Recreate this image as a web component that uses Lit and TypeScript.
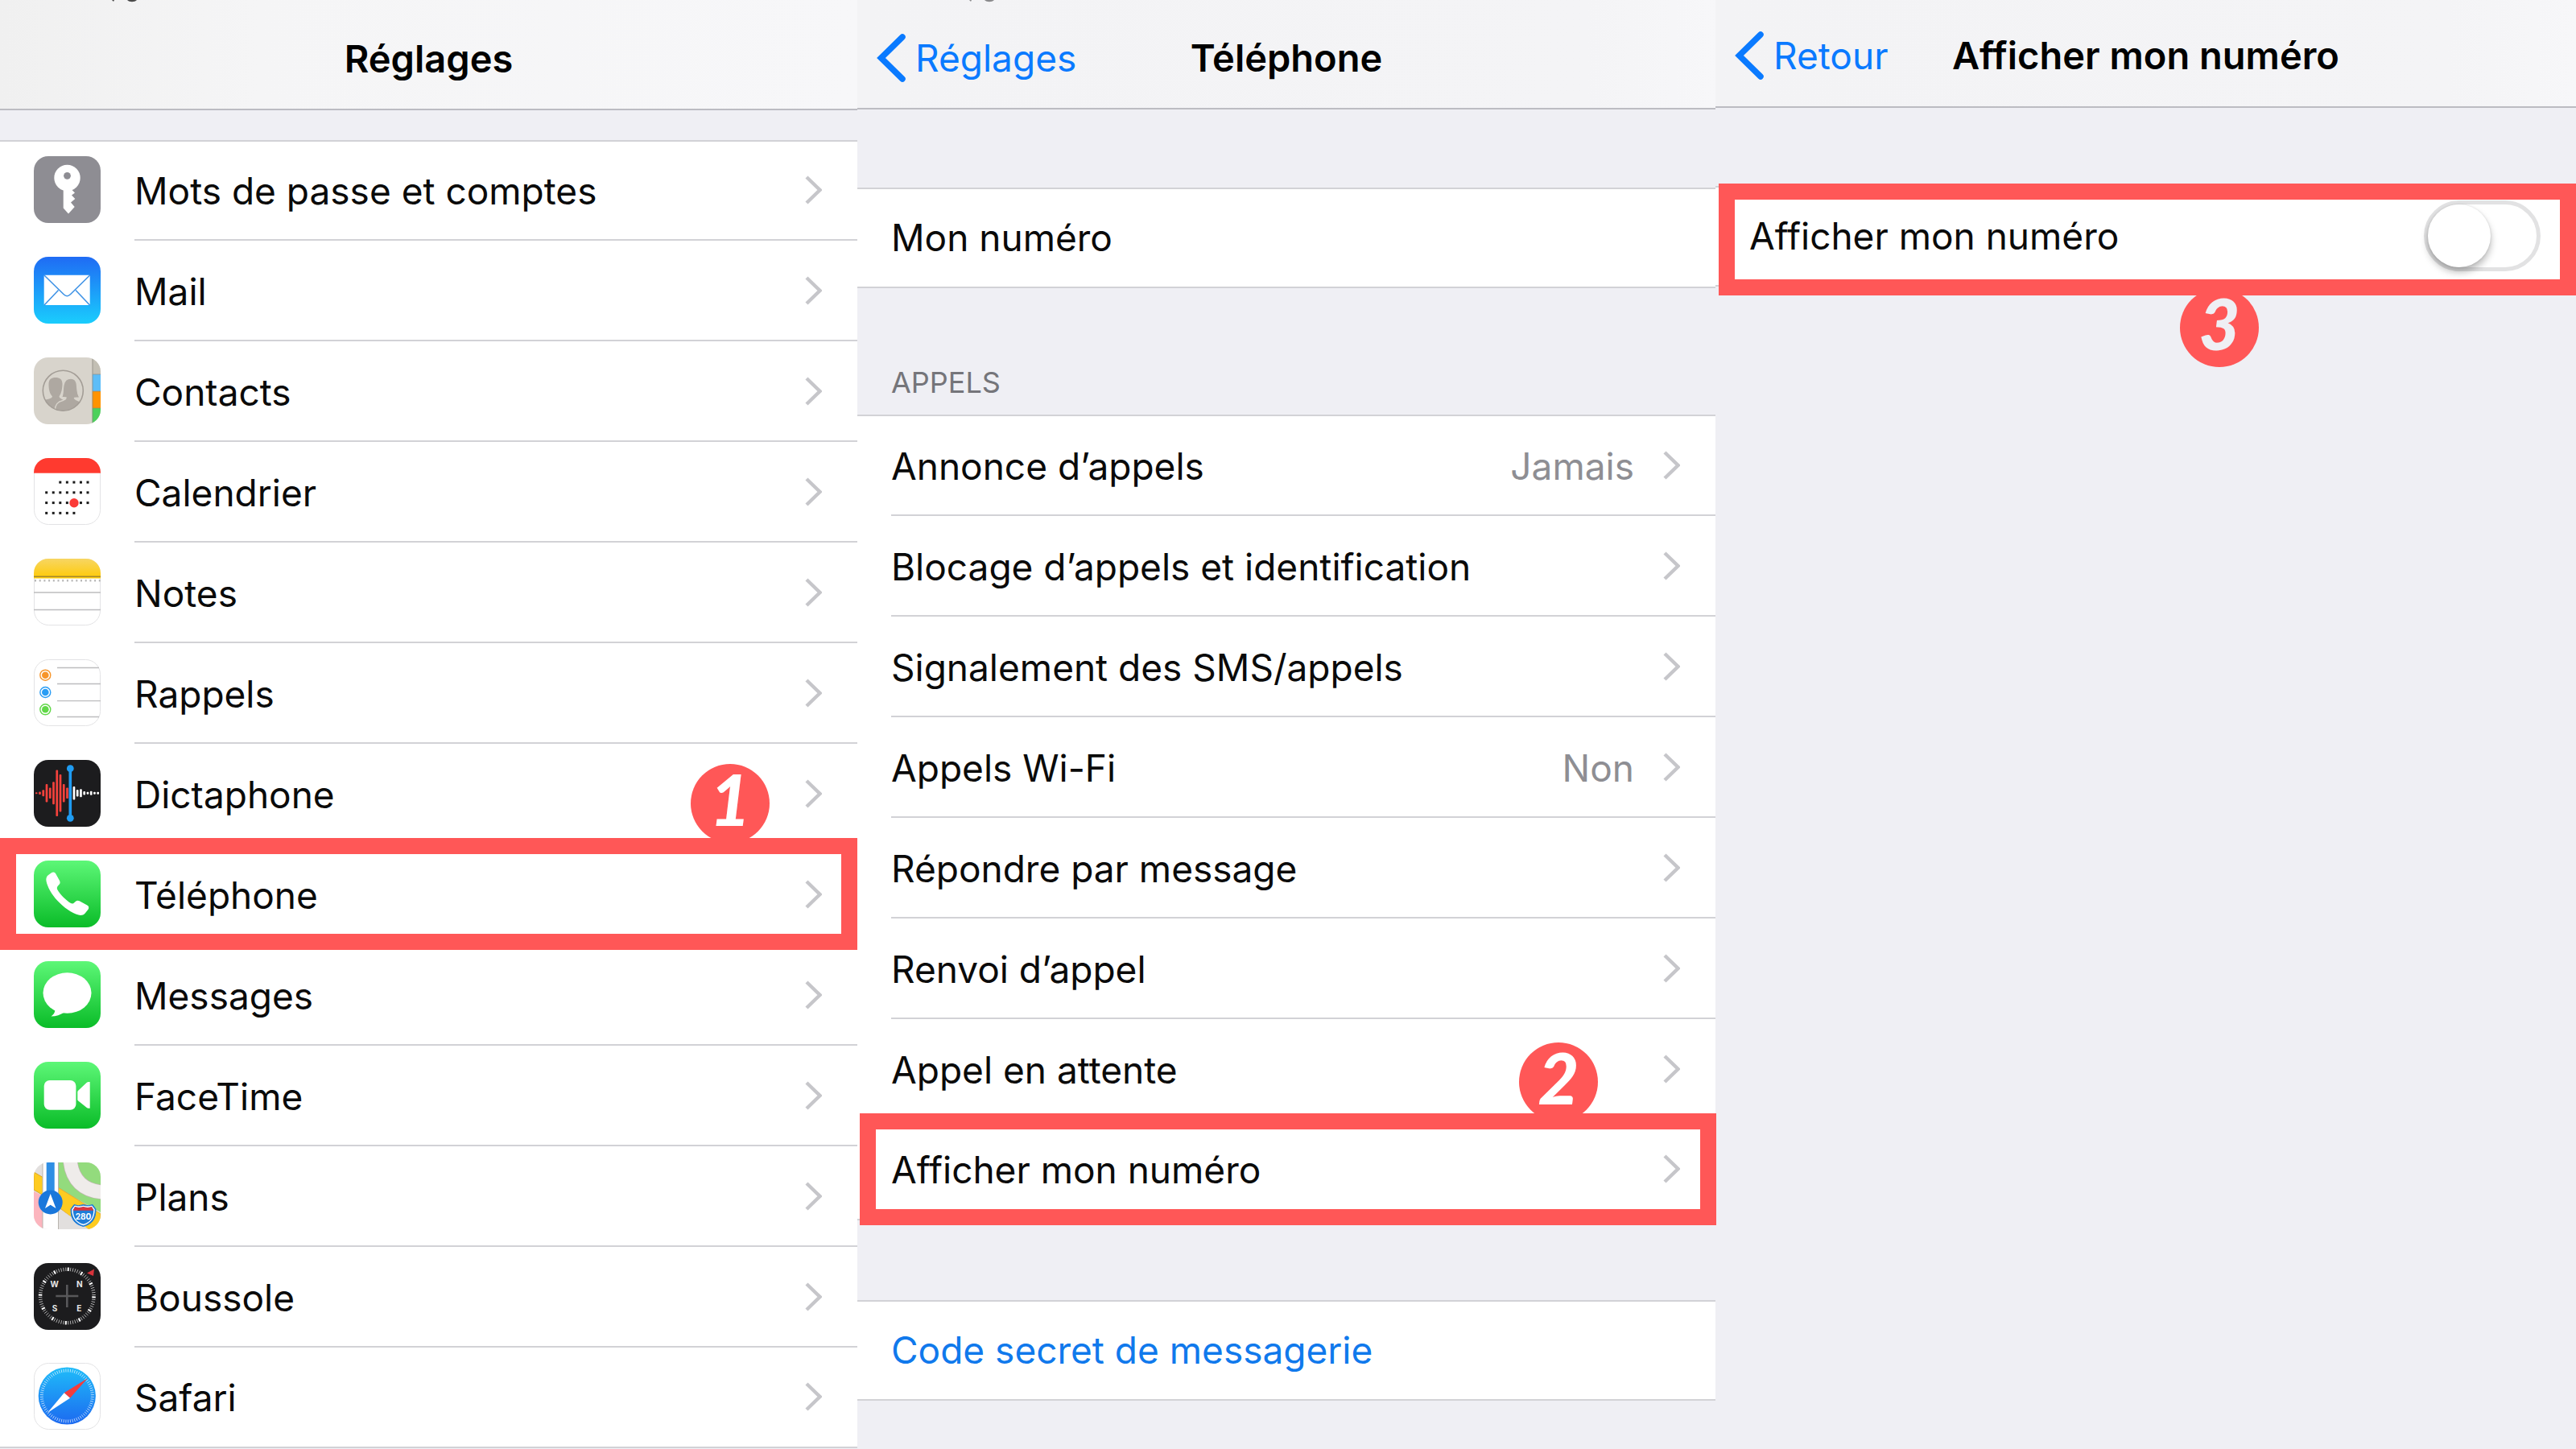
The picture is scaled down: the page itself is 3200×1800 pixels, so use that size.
import { LitElement, html, svg, css, nothing, TemplateResult } from "lit";
import { customElement, property, state } from "lit/decorators.js";

type Art = TemplateResult;

interface Item {
  label: string;
  icon?: string;
  value?: string;
  step?: number;
}

const phones: Item[] = [
  { label: "Mots de passe et comptes", icon: "key" },
  { label: "Mail", icon: "mail" },
  { label: "Contacts", icon: "contacts" },
  { label: "Calendrier", icon: "calendar" },
  { label: "Notes", icon: "notes" },
  { label: "Rappels", icon: "reminders" },
  { label: "Dictaphone", icon: "voice" },
  { label: "Téléphone", icon: "phone", step: 1 },
  { label: "Messages", icon: "messages" },
  { label: "FaceTime", icon: "facetime" },
  { label: "Plans", icon: "maps" },
  { label: "Boussole", icon: "compass" },
  { label: "Safari", icon: "safari" },
];

const calls: Item[] = [
  { label: "Annonce d’appels", value: "Jamais" },
  { label: "Blocage d’appels et identification" },
  { label: "Signalement des SMS/appels" },
  { label: "Appels Wi-Fi", value: "Non" },
  { label: "Répondre par message" },
  { label: "Renvoi d’appel" },
  { label: "Appel en attente" },
  { label: "Afficher mon numéro", step: 2 },
];

const gradient = (id: string, from: string, to: string): Art => svg`
  <linearGradient id=${id} x1="0" y1="0" x2="0" y2="1">
    <stop offset="0" stop-color=${from} /><stop offset="1" stop-color=${to} />
  </linearGradient>`;

const tile = (fill: string): Art => svg`<rect width="83" height="83" rx="18" fill=${fill} />`;
const outline = svg`<rect x="0.5" y="0.5" width="82" height="82" rx="18" fill="none" stroke="#e3e3e5" />`;

const calendarRows: number[][] = [
  [2, 3, 4, 5, 6],
  [0, 1, 2, 3, 4, 5, 6],
  [0, 1, 2, 3, 4, 5, 6],
  [0, 1, 2, 3, 4],
];

const redBars = [1, 1.7, 4, 11.3, 6.7, 14, 28.7, 23.3, 11.3, 6.7];
const whiteBars = [8.3, 4.3, 5, 2.3, 1.5, 2.5, 1.5, 1.5];

const ticks = (count: number, inner: number, outer: number, bold: number): Art[] =>
  Array.from({ length: count }, (_, i) => {
    const a = ((i + 0.5) * 2 * Math.PI) / count;
    const strong = bold > 0 && i % bold === 0;
    return svg`<line
      x1=${41.3 + inner * Math.sin(a)} y1=${41 - inner * Math.cos(a)}
      x2=${41.3 + outer * Math.sin(a)} y2=${41 - outer * Math.cos(a)}
      stroke="#fff" stroke-width=${strong ? 2 : 1} stroke-opacity=${strong ? 1 : 0.65} />`;
  });

const icons: Record<string, () => Art> = {
  key: () => svg`
    ${tile("#8e8d93")}
    <path fill="#fff" d="M36.7 39V64.5L43 71.5L50.7 63L46 57.5L51.3 53L47 48.5L51 45.5L46.5 41V39Z" />
    <circle cx="41.5" cy="27" r="16.2" fill="#fff" />
    <circle cx="41.5" cy="24.3" r="4.4" fill="#8e8d93" />`,
  mail: () => svg`
    <defs>${gradient("g-mail", "#1f6bf4", "#1acdfd")}</defs>
    ${tile("url(#g-mail)")}
    <rect x="12.7" y="22.7" width="57" height="37.3" rx="1" fill="#fff" />
    <g fill="none" stroke="#3f93e6" stroke-width="1.6">
      <path d="M13 23L37 46.5Q41.3 51 45.6 46.5L69.5 23" />
      <path d="M13 60L30.5 41.5M69.5 60L52 41.5" />
    </g>`,
  contacts: () => svg`
    <defs><clipPath id="c-con"><rect width="83" height="83" rx="18" /></clipPath>
      <clipPath id="c-ring"><circle cx="36.3" cy="41.3" r="25" /></clipPath></defs>
    <g clip-path="url(#c-con)">
      <rect width="83" height="83" fill="#d8d4cc" />
      <rect x="72.7" width="11" height="21" fill="#c3bfb4" />
      <rect x="72.7" y="21" width="11" height="21" fill="#5dbdf8" />
      <rect x="72.7" y="42" width="11" height="21" fill="#ff9300" />
      <rect x="72.7" y="63" width="11" height="20" fill="#4bd15b" />
      <path d="M73 0V83M73 21H83M73 42H83M73 63H83" stroke="#8b877f" stroke-width="1.2" stroke-opacity="0.6" />
    </g>
    <g clip-path="url(#c-ring)" fill="#aea8a1">
      <path d="M11 56C12 51 22 53 23 48.500C19 44 18.500 38 18.500 33C18.500 27 22 25 27 25C32 25 35.500 27 35.500 33C35.500 38 34.500 44 31.500 48.500C32 52 38 52 38 55V68H11Z" />
      <path stroke="#d8d4cc" stroke-width="1.4" d="M26 68C26 58 30 55 36 53.500C39 52.500 40 51.500 40 50C38 49.500 36 50 34.500 49.500C37 45 35.500 40 37 34C38 29 41 26 46 26C51 26 53 29 53.500 34C54 41 54 46 57 49.500C55.500 50.500 52 50 50.500 50.500C50.500 52 54 53 58 55V68Z" />
    </g>
    <circle cx="36.3" cy="41.3" r="25" fill="none" stroke="#a39d96" stroke-width="1.6" />`,
  calendar: () => svg`
    <defs><clipPath id="c-cal"><rect width="83" height="83" rx="18" /></clipPath></defs>
    ${tile("#fff")}${outline}
    <rect width="83" height="18.7" fill="#ff3a2f" clip-path="url(#c-cal)" />
    ${calendarRows.map((cols, r) =>
      cols.map((c) => svg`<rect x=${14.2 + c * 8.55} y=${28.6 + r * 12.75} width="3" height="3" fill="#1a1a1a" />`)
    )}
    <circle cx="50" cy="55.700" r="5.700" fill="#fb3b38" />`,
  notes: () => svg`
    <defs><clipPath id="c-not"><rect width="83" height="83" rx="18" /></clipPath>
      ${gradient("g-not", "#f7d663", "#ffca05")}</defs>
    ${tile("#fff")}${outline}
    <g clip-path="url(#c-not)">
      <rect width="83" height="24.500" fill="url(#g-not)" />
      <path d="M0 22.300H83" stroke="#a58a2c" stroke-width="1.600" />
      <path d="M1 27.300H83" stroke="#b9b9b9" stroke-width="2.400" stroke-dasharray="2 3.700" />
      <path d="M0 42H83M0 63.500H83" stroke="#bdbdbf" stroke-width="1.300" />
    </g>`,
  reminders: () => svg`
    ${tile("#fff")}${outline}
    <path d="M29 10.500H81M29 30.500H83M29 51.700H83M29 71.500H81" stroke="#bdbdbf" stroke-width="1.300" />
    ${[["#f7952a", 19.7], ["#2a9df4", 41], ["#61d848", 62.3]].map(
      ([c, y]) => svg`<circle cx="14.300" cy=${y} r="6.500" fill="#fff" stroke=${c} stroke-width="1.400" />
        <circle cx="14.300" cy=${y} r="4.300" fill=${c} />`
    )}`,
  voice: () => svg`
    ${tile("#1c1c1e")}
    ${redBars.map((h, i) => svg`<rect x=${1.9 + i * 4.25} y=${41.3 - h} width="2.700" height=${2 * h} rx="1" fill="#f5423c" />`)}
    ${whiteBars.map((h, i) => svg`<rect x=${48.6 + i * 4.25} y=${41.3 - h} width="2.700" height=${2 * h} rx="1" fill="#fff" />`)}
    <path d="M45.300 10.700V72.300" stroke="#1f9cf2" stroke-width="3.600" />
    <circle cx="45.300" cy="10.700" r="4.400" fill="#1f9cf2" /><circle cx="45.300" cy="72.300" r="4.400" fill="#1f9cf2" />`,
  phone: () => svg`
    <defs>${gradient("g-pho", "#5df777", "#0abc28")}</defs>
    ${tile("url(#g-pho)")}
    <path fill="#fff" d="M21.500 15.500C23.500 14 26 14.300 27.300 16.500L32 25C33 27 32.800 28.300 31.500 29.700L29.700 31.800C28.500 33.300 28.600 35 29.500 36.500C33 42.500 39.500 49 46 53C47.500 53.800 49 53.700 50.300 52.300L52 50.800C53.500 49.500 55 49.500 56.700 50.300L66.300 55.500C68.500 56.700 68.800 58.800 67.500 60.700L63.500 65.700C61.500 68 58.500 68.300 55.500 67.600C47 65.300 37.500 58.500 29.500 50C22 42 17 33 15.500 25.500C15 22.500 15.500 20 18 18Z" />`,
  messages: () => svg`
    <defs>${gradient("g-mes", "#5df777", "#0abc28")}</defs>
    ${tile("url(#g-mes)")}
    <ellipse cx="41.500" cy="39.500" rx="30" ry="25.300" fill="#fff" />
    <path fill="#fff" d="M26 59C27 63 25 66 21.500 68.500C28 68.500 33 66.500 38 63.500Z" />`,
  facetime: () => svg`
    <defs>${gradient("g-fac", "#5df777", "#0abc28")}</defs>
    ${tile("url(#g-fac)")}
    <rect x="12.700" y="23" width="39.700" height="36.700" rx="7" fill="#fff" />
    <path fill="#fff" d="M54.300 38C54.300 37 54.500 36.500 55.200 35.800L65.500 26Q66.700 25 68 25H69.700V57.700H68Q66.700 57.700 65.500 56.700L55.200 48.500C54.500 48 54.300 47.500 54.300 46.500Z" />`,
  maps: () => svg`
    <defs><clipPath id="c-map"><rect width="83" height="83" rx="18" /></clipPath></defs>
    <g clip-path="url(#c-map)">
      <rect width="83" height="83" fill="#e2dfde" />
      <path d="M30 0H83V62L30 32Z" fill="#93db7d" />
      <path d="M0 12L12 19V41L0 34Z" fill="#fecb20" stroke="#d9a52a" />
      <path d="M0 36L12 42V83H0Z" fill="#fcb5be" />
      <path d="M30 31L83 64V83H66L30 55Z" fill="#fecb20" stroke="#e0a93a" />
      <path d="M30 56L69 83.500H30Z" fill="#e2dfde" />
      <path d="M45 -4C47 22 62 36 87 37" fill="none" stroke="#bdb7ae" stroke-width="18.500" />
      <path d="M45 -4C47 22 62 36 87 37" fill="none" stroke="#efecea" stroke-width="17" />
      <rect x="11" width="19.500" height="83" fill="#fff" />
      <path d="M11 0V83M30.500 0V83" stroke="#b9b4ae" stroke-width="1" />
      <rect x="15.700" width="10" height="42" fill="#2f8ee4" />
      <circle cx="20.700" cy="49.500" r="15" fill="#1977db" />
      <path d="M20.700 39L27.500 57L20.700 52.800L14 57Z" fill="#fff" />
      <path d="M50 52.500Q55 55 61.500 52.500Q68 55 73 52.500L77 58C77 70 73 76.500 61.500 79.500C50 76.500 46 70 46 58Z" fill="#1e7cd8" stroke="#1e7cd8" />
      <path d="M51 54.500Q56 56 61.500 54.500Q67 56 72 54.500L75 58.500C75 69 71 74.500 61.500 77.500C52 74.500 48 69 48 58.500Z" fill="#1e7cd8" stroke="#fff" stroke-width="1.500" />
      <path d="M51 55Q56 56.800 61.500 55Q67 56.800 72 55L74.300 59.800H48.700Z" fill="#d9343f" />
      <text x="61.500" y="70.500" text-anchor="middle" font-size="10" font-weight="700" fill="#fff">280</text>
    </g>`,
  compass: () => svg`
    ${tile("#1c1c1e")}
    ${ticks(72, 31, 35.5, 6)}
    <path d="M41.300 27V55M27.300 41H55.300" stroke="#58585a" stroke-width="2.600" />
    <path d="M66 12.500L75 7.500L74 16Z" fill="#d8333b" />
    <g font-size="10" font-weight="700" fill="#e6e6e6" text-anchor="middle">
      <text x="25.700" y="30">W</text><text x="56.700" y="30">N</text>
      <text x="26" y="60">S</text><text x="56.300" y="60">E</text>
    </g>`,
  safari: () => svg`
    <defs>${gradient("g-saf", "#1fbcf9", "#1c69f0")}</defs>
    ${tile("#fff")}${outline}
    <circle cx="41.300" cy="41" r="35.600" fill="url(#g-saf)" />
    ${ticks(72, 29.5, 33.5, 0)}
    <path d="M66.700 19.300L45 43.700L37.700 37.300Z" fill="#f33c3c" />
    <path d="M17 62L37.700 37.300L45 43.700Z" fill="#fff" />`,
};

@customElement("settings-icon")
class SettingsIcon extends LitElement {
  @property() name = "";

  static styles = css`
    :host { display: block; flex: none; width: 83px; height: 83px; }
    .art { display: block; width: 100%; height: 100%; font-family: Inter, "Liberation Sans", sans-serif; }
  `;

  render() {
    return html`<svg class="art" viewBox="0 0 83 83" aria-hidden="true">${icons[this.name]?.()}</svg>`;
  }
}

@customElement("app-root")
class AppRoot extends LitElement {
  @state() private shown = false;

  static styles = css`
    :host {
      display: block;
      min-height: 100vh;
      background: #efeff4;
      color: #0a0a0a;
      font: 400 46px/56px Inter, "Liberation Sans", sans-serif;
      overflow-x: hidden;
    }
    * { box-sizing: border-box; }
    a { color: inherit; text-decoration: none; }
    ul { list-style: none; margin: 0; padding: 0; }
    .screens {
      display: grid;
      grid-template-columns: 1065fr 1066fr 1069fr;
      min-height: 100vh;
    }
    .screen { min-width: 0; }

    .bar {
      position: relative;
      display: grid;
      grid-template-columns: 1fr auto 1fr;
      align-items: end;
      height: 137px;
      padding: 0 24px 34px;
      border-bottom: 2px solid #bcbcc2;
      background: linear-gradient(90deg, #f3f3f5, #f4f4f6 85%, #f7f7f9);
    }
    .bar.root { background: linear-gradient(90deg, #f0f0f0, #f5f5f6 30%, #f7f7f9); }
    .bar.second { height: 136px; }
    .bar.third { height: 134px; padding-bottom: 35px; }
    .title { grid-column: 2; margin: 0; font-size: 47px; font-weight: 600; color: #000; }
    .back {
      display: flex;
      align-items: center;
      gap: 12px;
      color: #0a7aff;
    }
    .back-arrow { flex: none; width: 36px; height: 60px; margin: -2px 0; }
    .status { position: absolute; top: 0; left: 136px; width: 36px; height: 3px; }

    .group { background: #fff; box-shadow: inset 0 2px #d2d2d6; }
    .group.first { margin-top: 37px; }
    .group.spaced { margin-top: 97px; }
    .group.calls { padding-top: 1px; }
    .group.last { margin-top: 99px; }
    .heading {
      display: flex;
      align-items: flex-end;
      height: 157px;
      margin: 0;
      padding: 0 42px 18px;
      color: #75757a;
      font: 400 36px/44px Inter, "Liberation Sans", sans-serif;
    }

    .item { position: relative; }
    .row {
      display: flex;
      align-items: center;
      gap: 42px;
      height: 125px;
      padding-left: 42px;
    }
    .icon { margin-bottom: 2px; }
    .body {
      flex: 1;
      display: flex;
      align-items: center;
      gap: 36px;
      height: 125px;
      padding: 2px 44px 0 0;
      border-bottom: 2px solid #d2d2d6;
    }
    .item:last-child .row { border-bottom: 2px solid #d2d2d6; }
    .item:last-child .body { border-bottom-color: transparent; }
    .label { flex: 1; }
    .value { color: #8e8e93; }
    .chevron { flex: none; width: 21px; height: 36px; margin-bottom: 2px; }
    .link { color: #1079ec; }

    .frame {
      position: absolute;
      z-index: 2;
      border: 20px solid #ff5757;
      pointer-events: none;
    }
    .frame.s1 { inset: -8px 0 -6px 0; }
    .frame.s2 { inset: -8px -1px -6px 3px; }
    .frame.s3 { inset: -3px 0 -11px 4px; }
    .badge {
      position: absolute;
      z-index: 1;
      display: grid;
      place-items: center;
      width: 98px;
      height: 98px;
      border-radius: 50%;
      background: #ff5757;
      color: #fff;
      font: italic 900 88px/84px Lato, "DejaVu Sans Condensed", sans-serif;
      padding-bottom: 12px;
    }
    .badge.s1 { top: -100px; right: 109px; }
    .badge.s2 { top: -96px; right: 146px; }
    .badge.s3 { top: 127px; right: 394px; color: #efeff4; }

    .switch {
      appearance: none;
      flex: none;
      position: relative;
      width: 145px;
      height: 88px;
      margin: 0;
      border: 5px solid #e2e2e3;
      border-radius: 44px;
      background: #fff;
    }
    .switch::before {
      content: "";
      position: absolute;
      top: 0;
      left: 0;
      width: 78px;
      height: 78px;
      border-radius: 50%;
      background: #fff;
      box-shadow: 0 6px 10px rgba(0, 0, 0, 0.28), 0 0 3px rgba(0, 0, 0, 0.12);
    }
    .switch:checked { background: #4cd964; border-color: #4cd964; }
    .switch:checked::before { left: 57px; }
  `;

  private steps(step?: number) {
    return step
      ? html`<span class="badge s${step}">${step}</span><span class="frame s${step}"></span>`
      : nothing;
  }

  private chevron() {
    return html`<svg class="chevron" viewBox="0 0 21 36" aria-hidden="true">
      <path d="M2 2L18.500 18L2 34" fill="none" stroke="#c6c6ca" stroke-width="4.400" />
    </svg>`;
  }

  private item(item: Item) {
    return html`<li class="item">
      <a class="row" href="#">
        ${item.icon ? html`<settings-icon class="icon" name=${item.icon}></settings-icon>` : nothing}
        <span class="body">
          <span class="label">${item.label}</span>
          ${item.value ? html`<span class="value">${item.value}</span>` : nothing}
          ${this.chevron()}
        </span>
      </a>
      ${this.steps(item.step)}
    </li>`;
  }

  private back(label: string) {
    return html`<a class="back" href="#">
      <svg class="back-arrow" viewBox="0 0 36 60" aria-hidden="true">
        <path d="M32 4L5.500 30L32 56" fill="none" stroke="#0a7aff" stroke-width="7.500" stroke-linecap="round" />
      </svg>
      <span>${label}</span>
    </a>`;
  }

  private status(color: string) {
    return html`<svg class="status" viewBox="0 0 36 3" aria-hidden="true">
      <path d="M3 0H6L5 2ZM22 0C25 3 31 3 34 0Z" fill=${color} />
    </svg>`;
  }

  render() {
    return html`<main class="screens">
      <section class="screen">
        <header class="bar root">
          ${this.status("#4a4a4a")}
          <h1 class="title">Réglages</h1>
        </header>
        <ul class="group first">${phones.map((i) => this.item(i))}</ul>
      </section>

      <section class="screen">
        <header class="bar second">
          ${this.status("#8a8a8c")}
          ${this.back("Réglages")}
          <h1 class="title">Téléphone</h1>
        </header>
        <ul class="group spaced">
          <li class="item"><div class="row"><span class="body"><span class="label">Mon numéro</span></span></div></li>
        </ul>
        <h2 class="heading">APPELS</h2>
        <ul class="group calls">${calls.map((i) => this.item(i))}</ul>
        <ul class="group last">
          <li class="item"><a class="row link" href="#"><span class="body"><span class="label">Code secret de messagerie</span></span></a></li>
        </ul>
      </section>

      <section class="screen">
        <header class="bar third">
          ${this.back("Retour")}
          <h1 class="title">Afficher mon numéro</h1>
        </header>
        <ul class="group spaced">
          <li class="item">
            <div class="row">
              <span class="body">
                <label class="label" for="show-number">Afficher mon numéro</label>
                <input
                  class="switch"
                  id="show-number"
                  type="checkbox"
                  role="switch"
                  .checked=${this.shown}
                  @change=${(e: Event) => (this.shown = (e.target as HTMLInputElement).checked)}
                />
              </span>
            </div>
            ${this.steps(3)}
          </li>
        </ul>
      </section>
    </main>`;
  }
}
